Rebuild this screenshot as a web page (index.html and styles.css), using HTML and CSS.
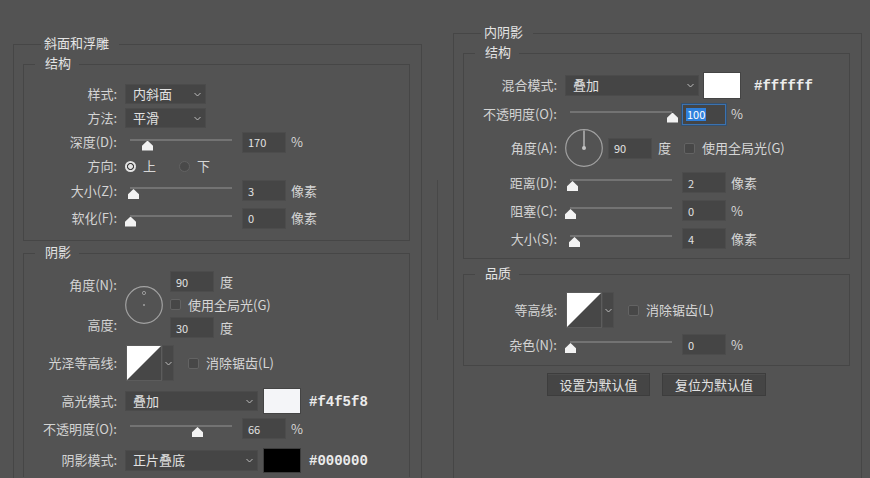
FILE: index.html
```html
<!DOCTYPE html>
<html lang="zh-CN">
<head>
<meta charset="utf-8">
<title>图层样式</title>
<link rel="stylesheet" href="styles.css">
</head>
<body>
<div class="page">
  <section class="group group-left">
    <div class="title">斜面和浮雕</div>
    <div class="box box-first">
      <div class="title">结构</div>
      <div class="rows">
        <div class="row h24">
          <span class="lbl">样式:</span>
          <div class="select w81"><span>内斜面</span><svg class="chev" width="7" height="5" viewBox="0 0 7 5"><path d="M0.5 1 L3.5 4 L6.5 1" fill="none" stroke="#bdbdbd" stroke-width="1"/></svg></div>
        </div>
        <div class="row h24">
          <span class="lbl">方法:</span>
          <div class="select w81"><span>平滑</span><svg class="chev" width="7" height="5" viewBox="0 0 7 5"><path d="M0.5 1 L3.5 4 L6.5 1" fill="none" stroke="#bdbdbd" stroke-width="1"/></svg></div>
        </div>
        <div class="row h24">
          <span class="lbl">深度(D):</span>
          <div class="slider"><div class="track"></div><div class="thumb" style="left:17px"></div></div>
          <div class="num">170</div><span class="unit">%</span>
        </div>
        <div class="row h24">
          <span class="lbl">方向:</span>
          <span class="radio on"></span><span class="radio-text">上</span>
          <span class="radio off"></span><span class="radio-text">下</span>
        </div>
        <div class="row h25">
          <span class="lbl">大小(Z):</span>
          <div class="slider"><div class="track"></div><div class="thumb" style="left:3px"></div></div>
          <div class="num">3</div><span class="unit">像素</span>
        </div>
        <div class="row h30">
          <span class="lbl">软化(F):</span>
          <div class="slider"><div class="track"></div><div class="thumb" style="left:0px"></div></div>
          <div class="num">0</div><span class="unit">像素</span>
        </div>
      </div>
    </div>
    <div class="box box-next-l">
      <div class="title">阴影</div>
      <div class="rows">
        <div class="angle-block">
          <div class="lbl lbl-stack"><span>角度(N):</span><span>高度:</span></div>
          <svg class="dial" width="38" height="38" viewBox="0 0 38 38"><circle cx="19" cy="19" r="18.3" fill="none" stroke="#a2a2a2" stroke-width="1.2"/><circle cx="19" cy="7" r="1.6" fill="none" stroke="#9a9a9a" stroke-width="1"/><circle cx="19" cy="19" r="1" fill="#a0a0a0"/></svg>
          <div class="angle-fields">
            <div class="fld"><div class="num">90</div><span class="unit">度</span></div>
            <div class="chk-row"><span class="chk"></span><span>使用全局光(G)</span></div>
            <div class="fld"><div class="num">30</div><span class="unit">度</span></div>
          </div>
        </div>
        <div class="row h50">
          <span class="lbl">光泽等高线:</span>
          <div class="contour"><svg width="34" height="34" viewBox="0 0 34 34"><rect width="34" height="34" fill="#474747"/><polygon points="0,0 34,0 0,34" fill="#ffffff"/></svg></div>
          <div class="contour-dd"><svg class="chev" width="7" height="5" viewBox="0 0 7 5"><path d="M0.5 1 L3.5 4 L6.5 1" fill="none" stroke="#bdbdbd" stroke-width="1"/></svg></div>
          <span class="chk chk-after"></span><span>消除锯齿(L)</span>
        </div>
        <div class="row h26">
          <span class="lbl">高光模式:</span>
          <div class="select w133"><span>叠加</span><svg class="chev" width="7" height="5" viewBox="0 0 7 5"><path d="M0.5 1 L3.5 4 L6.5 1" fill="none" stroke="#bdbdbd" stroke-width="1"/></svg></div>
          <div class="swatch swatch-light"></div>
          <span class="hex">#f4f5f8</span>
        </div>
        <div class="row h29">
          <span class="lbl">不透明度(O):</span>
          <div class="slider"><div class="track"></div><div class="thumb" style="left:67px"></div></div>
          <div class="num">66</div><span class="unit">%</span>
        </div>
        <div class="row h34">
          <span class="lbl">阴影模式:</span>
          <div class="select w133 tall"><span>正片叠底</span><svg class="chev" width="7" height="5" viewBox="0 0 7 5"><path d="M0.5 1 L3.5 4 L6.5 1" fill="none" stroke="#bdbdbd" stroke-width="1"/></svg></div>
          <div class="swatch swatch-black"></div>
          <span class="hex">#000000</span>
        </div>
      </div>
    </div>
  </section>

  <div class="splitter"></div>

  <section class="group group-right">
    <div class="title">内阴影</div>
    <div class="box box-first box-pad4">
      <div class="title">结构</div>
      <div class="rows">
        <div class="row h28">
          <span class="lbl">混合模式:</span>
          <div class="select w134 tall"><span>叠加</span><svg class="chev" width="7" height="5" viewBox="0 0 7 5"><path d="M0.5 1 L3.5 4 L6.5 1" fill="none" stroke="#bdbdbd" stroke-width="1"/></svg></div>
          <div class="swatch swatch-white"></div>
          <span class="hex hex-wide">#ffffff</span>
        </div>
        <div class="row h30">
          <span class="lbl">不透明度(O):</span>
          <div class="slider"><div class="track"></div><div class="thumb" style="left:102px"></div></div>
          <div class="num focus"><span class="sel">100</span></div><span class="unit">%</span>
        </div>
        <div class="row h38">
          <span class="lbl">角度(A):</span>
          <svg class="dial" width="38" height="38" viewBox="0 0 38 38"><circle cx="19" cy="19" r="18.3" fill="none" stroke="#a2a2a2" stroke-width="1.2"/><line x1="19" y1="19" x2="19" y2="1.5" stroke="#c4c4c4" stroke-width="1.3"/><circle cx="19" cy="19" r="2" fill="#c4c4c4"/></svg>
          <div class="num num-angle">90</div><span class="unit unit-deg">度</span>
          <span class="chk chk-angle"></span><span>使用全局光(G)</span>
        </div>
        <div class="row h31">
          <span class="lbl">距离(D):</span>
          <div class="slider"><div class="track"></div><div class="thumb" style="left:2px"></div></div>
          <div class="num">2</div><span class="unit">像素</span>
        </div>
        <div class="row h25">
          <span class="lbl">阻塞(C):</span>
          <div class="slider"><div class="track"></div><div class="thumb" style="left:0px"></div></div>
          <div class="num">0</div><span class="unit">%</span>
        </div>
        <div class="row h31">
          <span class="lbl">大小(S):</span>
          <div class="slider"><div class="track"></div><div class="thumb" style="left:4px"></div></div>
          <div class="num">4</div><span class="unit">像素</span>
        </div>
      </div>
    </div>
    <div class="box box-next-r box-pad8">
      <div class="title">品质</div>
      <div class="rows rows-q">
        <div class="row h44">
          <span class="lbl">等高线:</span>
          <div class="contour"><svg width="34" height="34" viewBox="0 0 34 34"><rect width="34" height="34" fill="#474747"/><polygon points="0,0 34,0 0,34" fill="#ffffff"/></svg></div>
          <div class="contour-dd"><svg class="chev" width="7" height="5" viewBox="0 0 7 5"><path d="M0.5 1 L3.5 4 L6.5 1" fill="none" stroke="#bdbdbd" stroke-width="1"/></svg></div>
          <span class="chk chk-after"></span><span>消除锯齿(L)</span>
        </div>
        <div class="row h25">
          <span class="lbl">杂色(N):</span>
          <div class="slider"><div class="track"></div><div class="thumb" style="left:0px"></div></div>
          <div class="num">0</div><span class="unit">%</span>
        </div>
      </div>
    </div>
    <div class="buttons">
      <button class="btn w103">设置为默认值</button>
      <button class="btn w104">复位为默认值</button>
    </div>
  </section>
</div>
</body>
</html>
```

FILE: styles.css
```css
* { box-sizing: border-box; }
html, body { margin: 0; padding: 0; }
body {
  background: #535353;
  width: 870px;
  height: 478px;
  overflow: hidden;
  font-family: "Noto Sans CJK SC", "Noto Sans", sans-serif;
  font-size: 13px;
  line-height: 16px;
  color: #d6d6d6;
}
.page { display: flex; align-items: flex-start; }

.group {
  width: 409px;
  flex: none;
  border: 1px solid #464646;
  border-bottom: 0;
  padding: 0 11px 0 9px;
}
.group-left { margin-left: 13px; margin-top: 44px; height: 434px; }
.group-right { margin-top: 33px; height: 445px; }

.splitter {
  flex: none;
  width: 1px;
  height: 140px;
  margin: 180px 15px 0 15px;
  background: #484848;
}

.title {
  width: fit-content;
  background: #535353;
  margin: -10px 0 0 18px;
  padding: 0 10px 0 3px;
  color: #e4e4e4;
  white-space: nowrap;
}
.box {
  border: 1px solid #464646;
  padding-bottom: 7px;
}
.box .title { margin-left: 11px; padding: 0 8px 0 10px; }
.box-first { margin-top: 13px; }
.box-next-l { margin-top: 12px; border-bottom: 0; padding-bottom: 0; }
.box-next-r { margin-top: 15px; }
.box-pad4 { padding-bottom: 4px; }
.box-pad8 { padding-bottom: 8px; }

.rows { margin-top: 11px; display: flex; flex-direction: column; }
.rows-q { margin-top: 7px; }

.row { display: flex; align-items: center; white-space: nowrap; }
.h24 { height: 24px; }
.h25 { height: 25px; }
.h26 { height: 26px; }
.h28 { height: 28px; }
.h29 { height: 29px; }
.h30 { height: 30px; }
.h31 { height: 31px; }
.h34 { height: 34px; }
.h38 { height: 38px; }
.h44 { height: 44px; }
.h50 { height: 50px; }

.lbl {
  flex: none;
  width: 93px;
  margin-right: 8px;
  text-align: right;
  white-space: nowrap;
  color: #d4d4d4;
}

.select {
  flex: none;
  display: flex;
  align-items: center;
  justify-content: space-between;
  height: 20px;
  background: #454545;
  border: 1px solid #4b4b4b;
  padding: 0 4px 0 7px;
  color: #e2e2e2;
}
.select.tall { height: 21px; }
.w81 { width: 81px; }
.w133 { width: 133px; }
.w134 { width: 134px; }
.chev { display: block; flex: none; }

.slider { position: relative; flex: none; width: 112px; height: 21px; }
.track {
  width: 102px;
  height: 2px;
  margin: 7px 0 0 5px;
  background: #737373;
}
.thumb {
  position: absolute;
  top: 9px;
  width: 11px;
  height: 10px;
  background: #f2f2f2;
  clip-path: polygon(50% 0, 100% 52%, 100% 100%, 0 100%, 0 52%);
}

.num {
  flex: none;
  display: flex;
  align-items: center;
  width: 44px;
  height: 21px;
  margin-left: 5px;
  padding-left: 5px;
  background: #454545;
  border: 1px solid #4c4c4c;
  font-size: 11px;
  color: #e2e2e2;
}
.num.focus {
  border-color: #3b72b0;
  box-shadow: 0 0 0 1px #34506e;
  padding-left: 3px;
}
.sel {
  background: #2f80dc;
  color: #ffffff;
  line-height: 13px;
  padding: 0 1px;
}
.unit { margin-left: 5px; }

.radio {
  flex: none;
  width: 11px;
  height: 11px;
  border-radius: 50%;
}
.radio.on {
  background: radial-gradient(circle at center, #e2e2e2 0 2.1px, #3e3e3e 2.6px 3.3px, #e2e2e2 3.8px 100%);
}
.radio.off {
  margin-left: 23px;
  background: #494949;
  border: 1px solid #626262;
}
.radio-text { margin-left: 7px; }

.chk {
  flex: none;
  width: 11px;
  height: 11px;
  border-radius: 2px;
  background: #474747;
  border: 1px solid #636363;
}

.angle-block { display: flex; align-items: center; height: 67px; }
.lbl-stack {
  display: flex;
  flex-direction: column;
  align-items: flex-end;
  gap: 24px;
}
.dial { display: block; flex: none; }
.angle-fields { display: flex; flex-direction: column; margin-left: 7px; }
.fld { display: flex; align-items: center; height: 21px; }
.fld .num { margin-left: 0; }
.fld .unit { margin-left: 6px; }
.chk-row { display: flex; align-items: center; height: 25px; gap: 7px; }

.contour {
  flex: none;
  width: 36px;
  height: 36px;
  border: 1px solid #5c5c5c;
  margin-left: 1px;
}
.contour svg { display: block; }
.contour-dd {
  flex: none;
  display: flex;
  align-items: center;
  justify-content: center;
  width: 12px;
  height: 36px;
  background: #474747;
  border: 1px solid #4e4e4e;
}
.chk-after { margin-left: 14px; margin-right: 7px; }

.swatch { flex: none; width: 38px; height: 26px; margin-left: 5px; border: 1px solid #444444; }
.swatch-light { background: #f4f5f8; }
.swatch-black { background: #000000; border-color: #3c3c3c; height: 25px; }
.swatch-white { background: #ffffff; height: 27px; margin-left: 4px; }
.hex {
  margin-left: 8px;
  margin-top: 2px;
  font-family: "Liberation Mono", "Courier New", monospace;
  font-size: 14px;
  font-weight: bold;
  color: #ececec;
}
.hex-wide { margin-left: 13px; }

.num-angle { margin-left: 5px; }
.unit-deg { margin-left: 6px; }
.chk-angle { margin-left: 13px; margin-right: 7px; }

.buttons {
  display: flex;
  justify-content: center;
  gap: 12px;
  margin-top: 7px;
}
.btn {
  height: 23px;
  background: #454545;
  border: 1px solid #3d3d3d;
  box-shadow: inset 0 1px 0 #4d4d4d;
  color: #e2e2e2;
  font-family: "Noto Sans CJK SC", "Noto Sans", sans-serif;
  font-size: 13px;
  line-height: 16px;
  padding: 0;
}
.w103 { width: 103px; }
.w104 { width: 104px; }
```
